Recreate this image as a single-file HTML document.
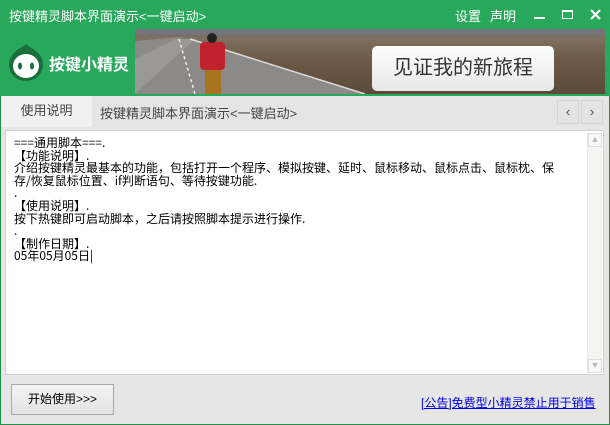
<!DOCTYPE html>
<html><head><meta charset="utf-8"><style>
*{margin:0;padding:0;box-sizing:border-box}
body{width:610px;height:425px;overflow:hidden;background:#e6e6e6;font-family:"Liberation Sans","Noto Sans CJK SC",sans-serif;position:relative}
.win{position:absolute;left:0;top:0;width:610px;height:425px;border:1px solid #1f8f4a;border-top:none}
.title{position:absolute;left:0;top:0;width:610px;height:29px;background:#28a85b;color:#fff;font-size:13px}
.title .t{position:absolute;left:9px;top:6px}
.title .m{position:absolute;top:6px}
.banner{position:absolute;left:0;top:29px;width:610px;height:67px;background:#28a85b}
.img{position:absolute;left:135px;top:0;width:470px;height:65px;overflow:hidden;background:linear-gradient(180deg,#6d6a6c 0,#7f7060 15%,#6e5a48 45%,#5c4a3a 100%)}
.tabs{position:absolute;left:1px;top:96px;width:607px;height:31px;background:#e4e4e4;font-size:13px;color:#444}
.content{position:absolute;left:5px;top:130px;width:599px;height:245px;background:#fff;border:1px solid #cfcfcf}
.txt{position:absolute;left:8px;top:6px;font-family:"WenQuanYi Zen Hei","Noto Sans CJK SC",sans-serif;font-size:12px;line-height:12.6px;color:#000;white-space:pre}
.sb{position:absolute;right:1px;top:2px;width:15px;height:240px;background:#f3f3f0;border-left:1px solid #e8e8e8}
.btn{position:absolute;left:11px;top:384px;width:103px;height:31px;border:1px solid #a9a9a9;background:linear-gradient(#f4f4f4,#e2e2e2);font-size:12px;text-align:center;line-height:29px;color:#000}
.link{position:absolute;left:421px;top:394px;font-size:12px;color:#0000ee;text-decoration:underline}
</style></head><body>
<div class="win"></div>
<div class="title">
<span class="t">按键精灵脚本界面演示&lt;一键启动&gt;</span>
<span class="m" style="left:455px">设置</span><span class="m" style="left:490px">声明</span>
<div style="position:absolute;left:534px;top:17px;width:11px;height:2px;background:#fff"></div>
<div style="position:absolute;left:562px;top:10px;width:11px;height:9px;border:1.5px solid #fff;border-top-width:2.5px"></div>
<svg style="position:absolute;left:590px;top:9px" width="11" height="11"><path d="M1 1L10 10M10 1L1 10" stroke="#fff" stroke-width="2.2"/></svg>
</div>
<div class="banner">
<svg style="position:absolute;left:7px;top:13px" width="38" height="40" viewBox="0 0 38 40">
<path d="M19 2C23 6 36 10 36 23A17 16 0 0 1 2 23C2 10 15 6 19 2Z" fill="#1a6e3c"/>
<ellipse cx="19" cy="24" rx="13" ry="12" fill="#fff"/>
<ellipse cx="13" cy="24" rx="2" ry="3.5" fill="#1a6e3c"/><ellipse cx="25" cy="24" rx="2" ry="3.5" fill="#1a6e3c"/>
</svg>
<div style="position:absolute;left:49px;top:22px;color:#fff;font-size:16px;font-weight:bold">按键小精灵</div>
<div class="img">
<svg width="470" height="65" style="position:absolute;left:0;top:0">
<polygon points="0,12 45,8 230,65 0,65" fill="#8b8a88"/>
<polygon points="0,30 40,10 60,10 0,65" fill="#9a9996"/>
<path d="M55 10L230 65" stroke="#ddd" stroke-width="1.5"/>
<path d="M44 10L60 65" stroke="#eee" stroke-width="1.5" stroke-dasharray="3 3"/>
<rect x="0" y="0" width="470" height="6" fill="#76737a"/>
<rect x="65" y="13" width="25" height="28" rx="4" fill="#c0222e"/>
<rect x="70" y="41" width="16" height="24" fill="#a7741f"/>
<circle cx="77" cy="9" r="5" fill="#222"/>
</svg>
<div style="position:absolute;left:237px;top:17px;width:182px;height:45px;background:linear-gradient(#fdfdfd,#e8e8e8);border-radius:5px;font-size:20px;color:#333;text-align:center;line-height:45px">见证我的新旅程</div>
</div>
</div>
<div class="tabs">
<div style="position:absolute;left:0;top:0;width:91px;height:31px;background:#f1f1f1;text-align:center;line-height:30px">使用说明</div>
<div style="position:absolute;left:99px;top:7px">按键精灵脚本界面演示&lt;一键启动&gt;</div>
<div style="position:absolute;left:556px;top:4px;width:22px;height:24px;border:1px solid #d4d4d4;text-align:center;line-height:22px">‹</div>
<div style="position:absolute;left:580px;top:4px;width:22px;height:24px;border:1px solid #d4d4d4;text-align:center;line-height:22px">›</div>
</div>
<div class="content">
<div class="txt">===通用脚本===.
【功能说明】.
介绍按键精灵最基本的功能，包括打开一个程序、模拟按键、延时、鼠标移动、鼠标点击、鼠标枕、保
存/恢复鼠标位置、if判断语句、等待按键功能.
.
【使用说明】.
按下热键即可启动脚本，之后请按照脚本提示进行操作.
.
【制作日期】.
05年05月05日|</div>
<div class="sb"><div style="height:14px;border:1px solid #ddd;background:#f8f8f8;color:#bbb;font-size:9px;text-align:center">▲</div><div style="position:absolute;bottom:0;width:14px;height:14px;border:1px solid #ddd;background:#f8f8f8;color:#bbb;font-size:9px;text-align:center">▼</div></div>
</div>
<div class="btn">开始使用&gt;&gt;&gt;</div>
<div class="link">[公告]免费型小精灵禁止用于销售</div>
</body></html>
